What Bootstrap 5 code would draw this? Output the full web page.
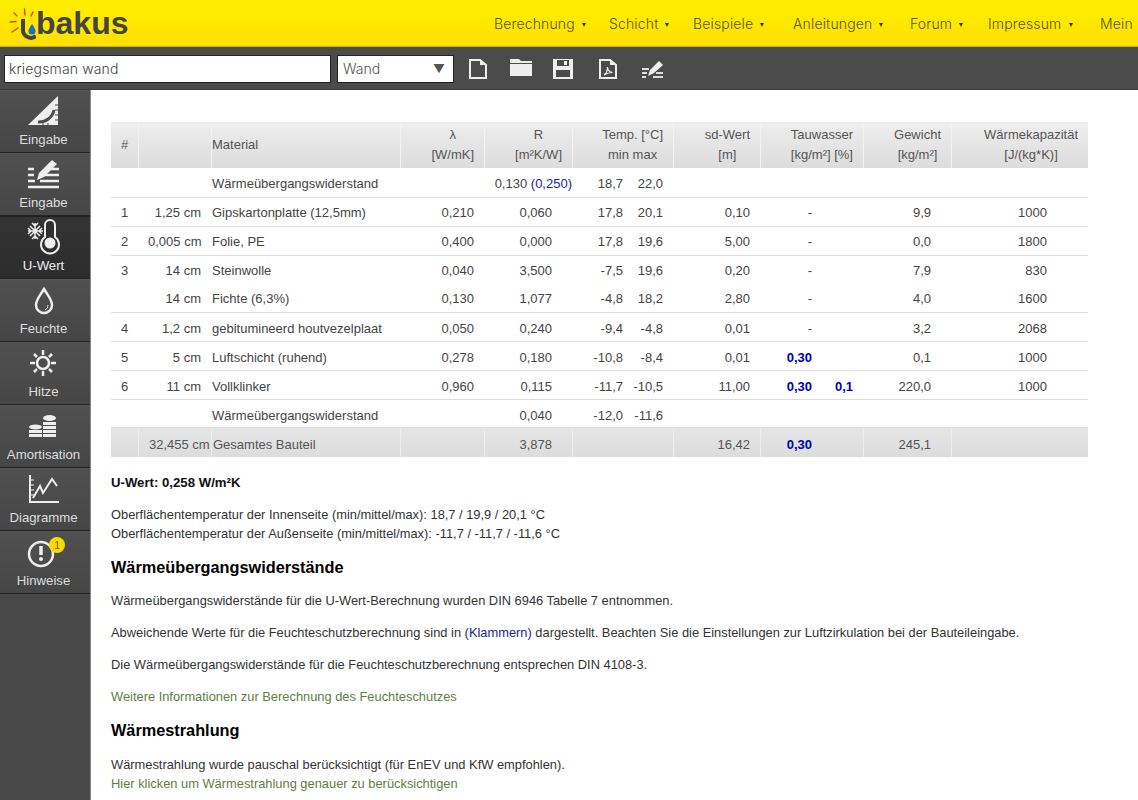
<!DOCTYPE html>
<html lang="de">
<head>
<meta charset="utf-8">
<title>ubakus</title>
<link href="https://cdn.jsdelivr.net/npm/bootstrap@5.3.0/dist/css/bootstrap.min.css" rel="stylesheet">
<style>
html,body{height:800px;overflow:hidden}
body{font-family:"Liberation Sans",Arial,sans-serif;font-size:13px;color:#333;background:#fff}
.topbar{height:47px;background:linear-gradient(#ffef00,#ffe000);border-bottom:1px solid #c9b200;overflow:hidden}
.logo-box{width:494px;flex:none;padding:6px 0 0 9px}
.logo-word{font-family:"Liberation Sans",sans-serif;font-weight:700;font-size:32px;line-height:34px;color:#444}
.topnav{white-space:nowrap;font-family:Inter,"DejaVu Sans",sans-serif;font-size:14px;font-weight:300;letter-spacing:.15px;color:#5a5510;padding-top:15px;line-height:17px}
.tn{flex:none;display:inline-block}
.tn-1{width:115px}.tn-2{width:84px}.tn-3{width:100px}.tn-4{width:117px}.tn-5{width:78px}.tn-6{width:112px}
.caret-dn{display:inline-block;border-left:2.5px solid transparent;border-right:2.5px solid transparent;border-top:4px solid #333;margin-left:7px;vertical-align:2px}
.toolbar{height:43px;background:#4b4b4b;border-bottom:1px solid #3a3a3a;padding:8px 0 0 4px}
.namebox{width:327px;height:28px;background:#fff;border:1px solid #222;font-family:Inter,"DejaVu Sans",sans-serif;font-size:14px;font-weight:300;letter-spacing:.15px;line-height:26px;padding-left:4px;color:#444;margin-right:6px}
.typebox{width:117px;height:28px;background:#fff;border:1px solid #222;font-family:Inter,"DejaVu Sans",sans-serif;font-size:14px;font-weight:300;line-height:26px;padding:0 8px 0 5px;color:#555;margin-right:15px}
.tri{font-size:12px}
.tb-ico{display:block;flex:none;margin-top:4px}
.tb-a{margin-right:23px}.tb-b{margin-right:21px}.tb-c{margin-right:26px}.tb-d{margin-right:25px}
.main-row{height:710px}
.sidenav{width:91px;flex:none;background:#484848;border-right:1px solid #8a8a8a}
.side-item{height:63px;border-bottom:1px solid #222;border-top:1px solid #555;color:#ddd;text-align:center;font-size:13.2px;position:relative;background:linear-gradient(#505050,#464646);line-height:16px;padding:2px 3px 0 0}
.side-item svg{display:block;margin:0 0 3px 25px;height:36px;width:40px}
.side-item.on{background:linear-gradient(#343434,#2c2c2c);color:#eee;border-top-color:#222}
.side-note{position:absolute;left:49px;top:5px;width:16px;height:16px;border-radius:50%;background:#fdd900;color:#665;font-size:11px;line-height:16px;text-align:center}
.content-pane{padding:32px 50px 0 20px;flex:1;min-width:0}
.calc{width:977px;border-collapse:separate;border-spacing:0;table-layout:fixed;font-size:13px;color:#444;margin-bottom:16px}
.calc th{font-weight:400;background:linear-gradient(#eee,#dcdcdc);height:46px;line-height:20px;color:#555;border-left:1px solid #f2f2f2;padding:0 10px;text-align:right}
.calc th:first-child{border-left:0;text-align:center;padding:0}
.calc th.mat{text-align:left;padding:0}
.hd{display:inline-block;text-align:center}
.calc td{height:29px;padding:2px 10px 0;text-align:right;border-bottom:1px solid #ddd;white-space:nowrap;line-height:16px}
.calc td:first-child{text-align:left;padding-right:0}
.calc td.mat{text-align:left;padding-left:1px;padding-right:0}
.calc td.tmp{padding-left:0}
.calc td.rv,.calc td.gw{padding-right:20px}
.calc td.rf{padding-right:0}
.calc td.wk{padding-right:41px}
.calc td.tw{padding-left:0}
.calc tr.first2 td{height:30px}
.calc tr.nob td{border-bottom:0;padding-top:0}
.calc tr.short td{height:28px}
.calc tr.fi td{padding-top:0}
.calc tr.dn td{padding-top:4px}
.calc tr.sum td{background:linear-gradient(#e6e6e6,#dcdcdc);border-bottom:0;border-left:1px solid #eee;color:#555}
.calc tr.sum td:first-child{border-left:0}
.tval{display:inline-block;width:40px;text-align:right}
.tau{display:flex;justify-content:flex-end}
.t2{display:inline-block;width:41px;text-align:right}
.blu{color:#0000b4;font-weight:700}
.klam{color:#22229c}
.prose{color:#333;font-size:12.87px;line-height:19px;white-space:nowrap}
.prose p{margin:0 0 13px}
.prose h5{font-size:16.3px;line-height:20px;font-weight:700;color:#000;margin:0 0 14px}
.prose a{color:#5f7d45;text-decoration:none}
.prose p.uval{font-weight:700;color:#111;font-size:13.2px;margin-bottom:13px}
.prose p.mb-a{margin-bottom:14px}
.prose p.mb-b{margin-bottom:14px}
.prose h5.mb-c{margin-bottom:15px}
</style>
</head>
<body>
<div class="topbar d-flex">
  <div class="logo-box">
    <div class="d-flex">
      <svg width="27" height="34" viewBox="0 0 27 34"><g stroke="#e33c12" stroke-width="1.400" stroke-linecap="round"><path d="M15.500 3l.5 6M24 6l-2 4M5 7l3 3M1 16l6-.5M3 26l6-4"/></g><path d="M14 13v10a8 8 0 0 0 13 7" fill="none" stroke="#444" stroke-width="4"/><path d="M23 18c-2 3-3.500 5-3.500 7a3.500 3.500 0 0 0 7 0c0-2-1.500-4-3.500-7z" fill="#1573c0"/></svg>
      <span class="logo-word">bakus</span>
    </div>
  </div>
  <div class="topnav d-flex">
    <span class="tn tn-1">Berechnung<i class="caret-dn"></i></span>
    <span class="tn tn-2">Schicht<i class="caret-dn"></i></span>
    <span class="tn tn-3">Beispiele<i class="caret-dn"></i></span>
    <span class="tn tn-4">Anleitungen<i class="caret-dn"></i></span>
    <span class="tn tn-5">Forum<i class="caret-dn"></i></span>
    <span class="tn tn-6">Impressum<i class="caret-dn"></i></span>
    <span class="tn">Mein</span>
  </div>
</div>
<div class="toolbar d-flex">
  <div class="namebox">kriegsman wand</div>
  <div class="typebox d-flex justify-content-between"><span>Wand</span><span class="tri">▼</span></div>
  <svg class="tb-ico tb-a" width="18" height="20" viewBox="0 0 18 20"><path d="M1 1h10l6 5v13H1z" fill="none" stroke="#eee" stroke-width="2"/><path d="M11 0v6h7z" fill="#eee"/></svg>
  <svg class="tb-ico tb-b" width="22" height="19" viewBox="0 0 22 19"><path d="M0 0h9l2 2h11v2H0z" fill="#eee"/><path d="M0 5h22v12H0z" fill="#eee"/></svg>
  <svg class="tb-ico tb-c" width="20" height="20" viewBox="0 0 20 20"><path d="M0 0h20v20H0z" fill="#eee"/><path d="M4 1h12v6H4z" fill="#4b4b4b"/><path d="M11 2h3v4h-3z" fill="#eee"/><path d="M3 11h14v7H3z" fill="#4b4b4b"/></svg>
  <svg class="tb-ico tb-d" width="18" height="20" viewBox="0 0 18 20"><path d="M1 1h10l6 5v13H1z" fill="none" stroke="#eee" stroke-width="2"/><path d="M11 0v6h7z" fill="#eee"/><path d="M5 16c3-2 3.500-5 3.500-8 0 3 2 5 5 5.500-3 0-6 1-8.500 2.500z" fill="none" stroke="#eee" stroke-width="1.200"/></svg>
  <svg class="tb-ico" width="22" height="20" viewBox="0 0 22 20"><path d="M0 10h7M0 14h5M0 18h4M14 14h7M11 18h10" stroke="#ddd" stroke-width="2"/><path d="M17 2l4 4-9 8-6 3 2-6z" fill="#eee"/></svg>
</div>
<div class="main-row d-flex">
  <nav class="sidenav">
    <div class="side-item"><svg viewBox="0 0 40 36"><path d="M33 3v29H3z" fill="#eee"/><path d="M13 29a15 15 0 0 0 16-12" fill="none" stroke="#4b4b4b" stroke-width="3"/><path d="M30 12h3M30 17h3M30 22h3M30 27h3M18 30v2M23 30v2" stroke="#4b4b4b"/></svg>Eingabe</div>
    <div class="side-item"><svg viewBox="0 0 40 36"><path d="M3 13h6M3 19h6M3 25h7M3 31h31M21 13h13M18 19h16M15 25h19" stroke="#eee" stroke-width="2.500"/><path d="M27 4l5 4-13 13-7 3 2-7z" fill="#eee"/></svg>Eingabe</div>
    <div class="side-item on"><svg viewBox="0 0 40 36"><path d="M10 4v16M3 12h15M5 7l10 10M15 7L5 17M7 4l3 3 3-3M7 20l3-3 3 3M3 9l3 3-3 3M17 9l-3 3 3 3" fill="none" stroke="#eee" stroke-width="1.500"/><path d="M20 6a5 5 0 0 1 10 0v12a9 9 0 1 1-10 0z" fill="#2f2f2f" stroke="#eee" stroke-width="2"/><circle cx="25" cy="24" r="5.500" fill="#eee"/></svg>U-Wert</div>
    <div class="side-item"><svg viewBox="0 0 40 36"><path d="M19 7c-5 8-8 11-8 16a8 8 0 0 0 16 0c0-5-3-8-8-16z" fill="none" stroke="#eee" stroke-width="2.500"/><path d="M23 23a5 5 0 0 1-3 5" fill="none" stroke="#eee"/></svg>Feuchte</div>
    <div class="side-item"><svg viewBox="0 0 40 36"><circle cx="18" cy="18" r="6" fill="none" stroke="#eee" stroke-width="2.500"/><path d="M18 5v5M18 26v5M5 18h5M26 18h5M9 9l3 3M24 24l3 3M27 9l-3 3M12 24l-3 3" stroke="#eee" stroke-width="2.500"/></svg>Hitze</div>
    <div class="side-item"><svg viewBox="0 0 40 36"><g fill="#eee"><ellipse cx="24.500" cy="10" rx="6.500" ry="3"/><path d="M18 14h13v3H18zM18 18h13v3H18zM18 22h13v3H18zM18 26h13v3H18zM4 22h13v3H4zM4 26h13v3H4z"/><ellipse cx="10.500" cy="19" rx="6.500" ry="2.500"/></g></svg>Amortisation</div>
    <div class="side-item"><svg viewBox="0 0 40 36"><path d="M5 4v27h29" fill="none" stroke="#eee" stroke-width="2"/><path d="M8 27l7-12 3 7 9-14 5 7" fill="none" stroke="#eee" stroke-width="2"/><path d="M5 9h4M5 14h4M5 19h4M5 24h4" stroke="#eee"/></svg>Diagramme</div>
    <div class="side-item"><svg viewBox="0 0 40 36"><circle cx="16" cy="20" r="12" fill="none" stroke="#eee" stroke-width="2.500"/><path d="M16 12v9" stroke="#eee" stroke-width="3.500"/><circle cx="16" cy="25" r="2" fill="#eee"/></svg>Hinweise<span class="side-note">1</span></div>
  </nav>
  <main class="content-pane">
    <table class="calc">
      <colgroup><col style="width:27px"><col style="width:73px"><col style="width:189px"><col style="width:84px"><col style="width:88px"><col style="width:101px"><col style="width:87px"><col style="width:103px"><col style="width:88px"><col style="width:137px"></colgroup>
      <thead><tr><th>#</th><th></th><th class="mat">Material</th><th><span class="hd">λ<br>[W/mK]</span></th><th><span class="hd">R<br>[m²K/W]</span></th><th><span class="hd">Temp. [°C]<br>min max</span></th><th><span class="hd">sd-Wert<br>[m]</span></th><th><span class="hd">Tauwasser<br>[kg/m²] [%]</span></th><th><span class="hd">Gewicht<br>[kg/m²]</span></th><th><span class="hd">Wärmekapazität<br>[J/(kg*K)]</span></th></tr></thead>
      <tbody>
      <tr class="first2"><td></td><td></td><td class="mat">Wärmeübergangswiderstand</td><td></td><td class="rv rf">0,130 <span class="klam">(0,250)</span></td><td class="tmp"><span class="tval">18,7</span><span class="tval">22,0</span></td><td></td><td></td><td></td><td></td></tr>
      <tr><td>1</td><td>1,25 cm</td><td class="mat">Gipskartonplatte (12,5mm)</td><td>0,210</td><td class="rv">0,060</td><td class="tmp"><span class="tval">17,8</span><span class="tval">20,1</span></td><td>0,10</td><td class="tw"><div class="tau"><span>-</span><span class="t2"></span></div></td><td class="gw">9,9</td><td class="wk">1000</td></tr>
      <tr><td>2</td><td>0,005 cm</td><td class="mat">Folie, PE</td><td>0,400</td><td class="rv">0,000</td><td class="tmp"><span class="tval">17,8</span><span class="tval">19,6</span></td><td>5,00</td><td class="tw"><div class="tau"><span>-</span><span class="t2"></span></div></td><td class="gw">0,0</td><td class="wk">1800</td></tr>
      <tr class="nob"><td>3</td><td>14 cm</td><td class="mat">Steinwolle</td><td>0,040</td><td class="rv">3,500</td><td class="tmp"><span class="tval">-7,5</span><span class="tval">19,6</span></td><td>0,20</td><td class="tw"><div class="tau"><span>-</span><span class="t2"></span></div></td><td class="gw">7,9</td><td class="wk">830</td></tr>
      <tr class="short fi"><td></td><td>14 cm</td><td class="mat">Fichte (6,3%)</td><td>0,130</td><td class="rv">1,077</td><td class="tmp"><span class="tval">-4,8</span><span class="tval">18,2</span></td><td>2,80</td><td class="tw"><div class="tau"><span>-</span><span class="t2"></span></div></td><td class="gw">4,0</td><td class="wk">1600</td></tr>
      <tr class="dn"><td>4</td><td>1,2 cm</td><td class="mat">gebitumineerd houtvezelplaat</td><td>0,050</td><td class="rv">0,240</td><td class="tmp"><span class="tval">-9,4</span><span class="tval">-4,8</span></td><td>0,01</td><td class="tw"><div class="tau"><span>-</span><span class="t2"></span></div></td><td class="gw">3,2</td><td class="wk">2068</td></tr>
      <tr class="dn"><td>5</td><td>5 cm</td><td class="mat">Luftschicht (ruhend)</td><td>0,278</td><td class="rv">0,180</td><td class="tmp"><span class="tval">-10,8</span><span class="tval">-8,4</span></td><td>0,01</td><td class="tw"><div class="tau"><span class="blu">0,30</span><span class="t2"></span></div></td><td class="gw">0,1</td><td class="wk">1000</td></tr>
      <tr class="dn"><td>6</td><td>11 cm</td><td class="mat">Vollklinker</td><td>0,960</td><td class="rv">0,115</td><td class="tmp"><span class="tval">-11,7</span><span class="tval">-10,5</span></td><td>11,00</td><td class="tw"><div class="tau"><span class="blu">0,30</span><span class="t2 blu">0,1</span></div></td><td class="gw">220,0</td><td class="wk">1000</td></tr>
      <tr class="short dn"><td></td><td></td><td class="mat">Wärmeübergangswiderstand</td><td></td><td class="rv">0,040</td><td class="tmp"><span class="tval">-12,0</span><span class="tval">-11,6</span></td><td></td><td></td><td></td><td></td></tr>
      <tr class="sum dn"><td></td><td>32,455 cm</td><td class="mat">Gesamtes Bauteil</td><td></td><td class="rv">3,878</td><td></td><td>16,42</td><td class="tw"><div class="tau"><span class="blu">0,30</span><span class="t2"></span></div></td><td class="gw">245,1</td><td></td></tr>
      </tbody>
    </table>
    <div class="prose">
      <p class="uval">U-Wert: 0,258 W/m²K</p>
      <p class="mb-a">Oberflächentemperatur der Innenseite (min/mittel/max): 18,7 / 19,9 / 20,1 °C<br>Oberflächentemperatur der Außenseite (min/mittel/max): -11,7 / -11,7 / -11,6 °C</p>
      <h5>Wärmeübergangswiderstände</h5>
      <p>Wärmeübergangswiderstände für die U-Wert-Berechnung wurden DIN 6946 Tabelle 7 entnommen.</p>
      <p>Abweichende Werte für die Feuchteschutzberechnung sind in <span class="klam">(Klammern)</span> dargestellt. Beachten Sie die Einstellungen zur Luftzirkulation bei der Bauteileingabe.</p>
      <p>Die Wärmeübergangswiderstände für die Feuchteschutzberechnung entsprechen DIN 4108-3.</p>
      <p class="mb-b"><a href="#">Weitere Informationen zur Berechnung des Feuchteschutzes</a></p>
      <h5 class="mb-c">Wärmestrahlung</h5>
      <p>Wärmestrahlung wurde pauschal berücksichtigt (für EnEV und KfW empfohlen).<br><a href="#">Hier klicken um Wärmestrahlung genauer zu berücksichtigen</a></p>
    </div>
  </main>
</div>
<script src="https://cdn.jsdelivr.net/npm/bootstrap@5.3.0/dist/js/bootstrap.bundle.min.js"></script>
</body>
</html>
